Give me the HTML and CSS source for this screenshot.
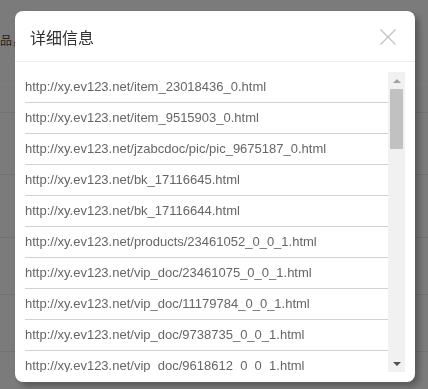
FILE: index.html
```
<!DOCTYPE html>
<html lang="zh-CN">
<head>
<meta charset="utf-8">
<title>详细信息</title>
<link rel="stylesheet" href="styles.css">
</head>
<body>
<div class="page">
  <div class="page-top"><span class="page-text">品，</span></div>
  <div class="page-row r1"></div>
  <div class="page-row r2"></div>
  <div class="page-row r3"></div>
  <div class="page-row r4"></div>
  <div class="page-row r5"></div>
  <div class="page-row r6"></div>
</div>
<div class="mask"></div>
<div class="layer">
  <div class="layer-head">
    <span class="layer-title">详细信息</span>
    <span class="layer-close" aria-label="关闭">
      <svg width="16" height="16" viewBox="0 0 16 16"><path d="M0.5 0.5 L15.5 15.5 M15.5 0.5 L0.5 15.5" stroke="#c4c4c4" stroke-width="1.4" fill="none"/></svg>
    </span>
  </div>
  <div class="layer-body">
    <div class="list-wrap">
      <ul class="url-list">
        <li>http://xy.ev123.net/item_23018436_0.html</li>
        <li>http://xy.ev123.net/item_9515903_0.html</li>
        <li>http://xy.ev123.net/jzabcdoc/pic/pic_9675187_0.html</li>
        <li>http://xy.ev123.net/bk_17116645.html</li>
        <li>http://xy.ev123.net/bk_17116644.html</li>
        <li>http://xy.ev123.net/products/23461052_0_0_1.html</li>
        <li>http://xy.ev123.net/vip_doc/23461075_0_0_1.html</li>
        <li>http://xy.ev123.net/vip_doc/11179784_0_0_1.html</li>
        <li>http://xy.ev123.net/vip_doc/9738735_0_0_1.html</li>
        <li>http://xy.ev123.net/vip_doc/9618612_0_0_1.html</li>
      </ul>
      <div class="scrollbar">
        <div class="sb-btn"><span class="tri-up"></span></div>
        <div class="sb-track"><div class="sb-thumb"></div></div>
        <div class="sb-btn"><span class="tri-down"></span></div>
      </div>
    </div>
  </div>
</div>
</body>
</html>
```
FILE: styles.css
```
html, body {
  margin: 0;
  padding: 0;
  height: 100%;
  overflow: hidden;
}
body {
  font-family: "Liberation Sans", "Noto Sans CJK SC", sans-serif;
  background: #f7f7f7;
}
.page {
  display: flex;
  flex-direction: column;
}
.page-top {
  height: 85px;
  border-bottom: 1px solid #ffffff;
  box-sizing: border-box;
}
.page-text {
  display: block;
  padding-top: 31px;
  font-family: "Noto Sans CJK SC", sans-serif;
  font-size: 12px;
  color: #444;
  line-height: 18px;
}
.page-row {
  box-sizing: border-box;
  border-bottom: 1px solid #e2e2e2;
}
.r1 { height: 28px; }
.r2 { height: 62px; }
.r3 { height: 63px; }
.r4 { height: 57px; }
.r5 { height: 57px; }
.r6 { height: 36px; border-bottom: none; }
.mask {
  position: fixed;
  inset: 0;
  background: rgba(0, 0, 0, 0.5);
}
.layer {
  position: fixed;
  left: 15px;
  top: 11px;
  width: 400px;
  height: 371px;
  background: #fff;
  border-radius: 8px;
  box-shadow: 4px 4px 6px rgba(0, 0, 0, 0.3);
  display: flex;
  flex-direction: column;
  overflow: hidden;
}
.layer-head {
  height: 50px;
  flex: none;
  border-bottom: 1px solid #eeeeee;
  display: flex;
  align-items: center;
  justify-content: space-between;
  padding: 0 19px 0 15px;
}
.layer-title {
  font-family: "Noto Sans CJK SC", sans-serif;
  font-size: 16px;
  color: #333;
  line-height: 20px;
  margin-top: 2px;
}
.layer-close {
  display: flex;
  width: 16px;
  height: 16px;
  margin-top: 2px;
}
.layer-body {
  padding: 10px;
  flex: 1;
  min-height: 0;
  display: flex;
}
.list-wrap {
  flex: 1;
  display: flex;
  height: 300px;
}
.url-list {
  list-style: none;
  margin: 0;
  padding: 0;
  flex: 1;
  overflow: hidden;
}
.url-list li {
  height: 30px;
  line-height: 30px;
  border-bottom: 1px solid #d2d2d2;
  font-size: 13px;
  color: #666;
  white-space: nowrap;
}
.scrollbar {
  width: 17px;
  flex: none;
  background: #f1f1f1;
  display: flex;
  flex-direction: column;
}
.sb-btn {
  height: 17px;
  display: flex;
  align-items: center;
  justify-content: center;
}
.tri-up {
  width: 0;
  height: 0;
  border-left: 4px solid transparent;
  border-right: 4px solid transparent;
  border-bottom: 4px solid #a3a3a3;
}
.tri-down {
  width: 0;
  height: 0;
  border-left: 4px solid transparent;
  border-right: 4px solid transparent;
  border-top: 4px solid #505050;
}
.sb-track {
  flex: 1;
  padding: 0 2px;
}
.sb-thumb {
  height: 60px;
  background: #c1c1c1;
}
```
